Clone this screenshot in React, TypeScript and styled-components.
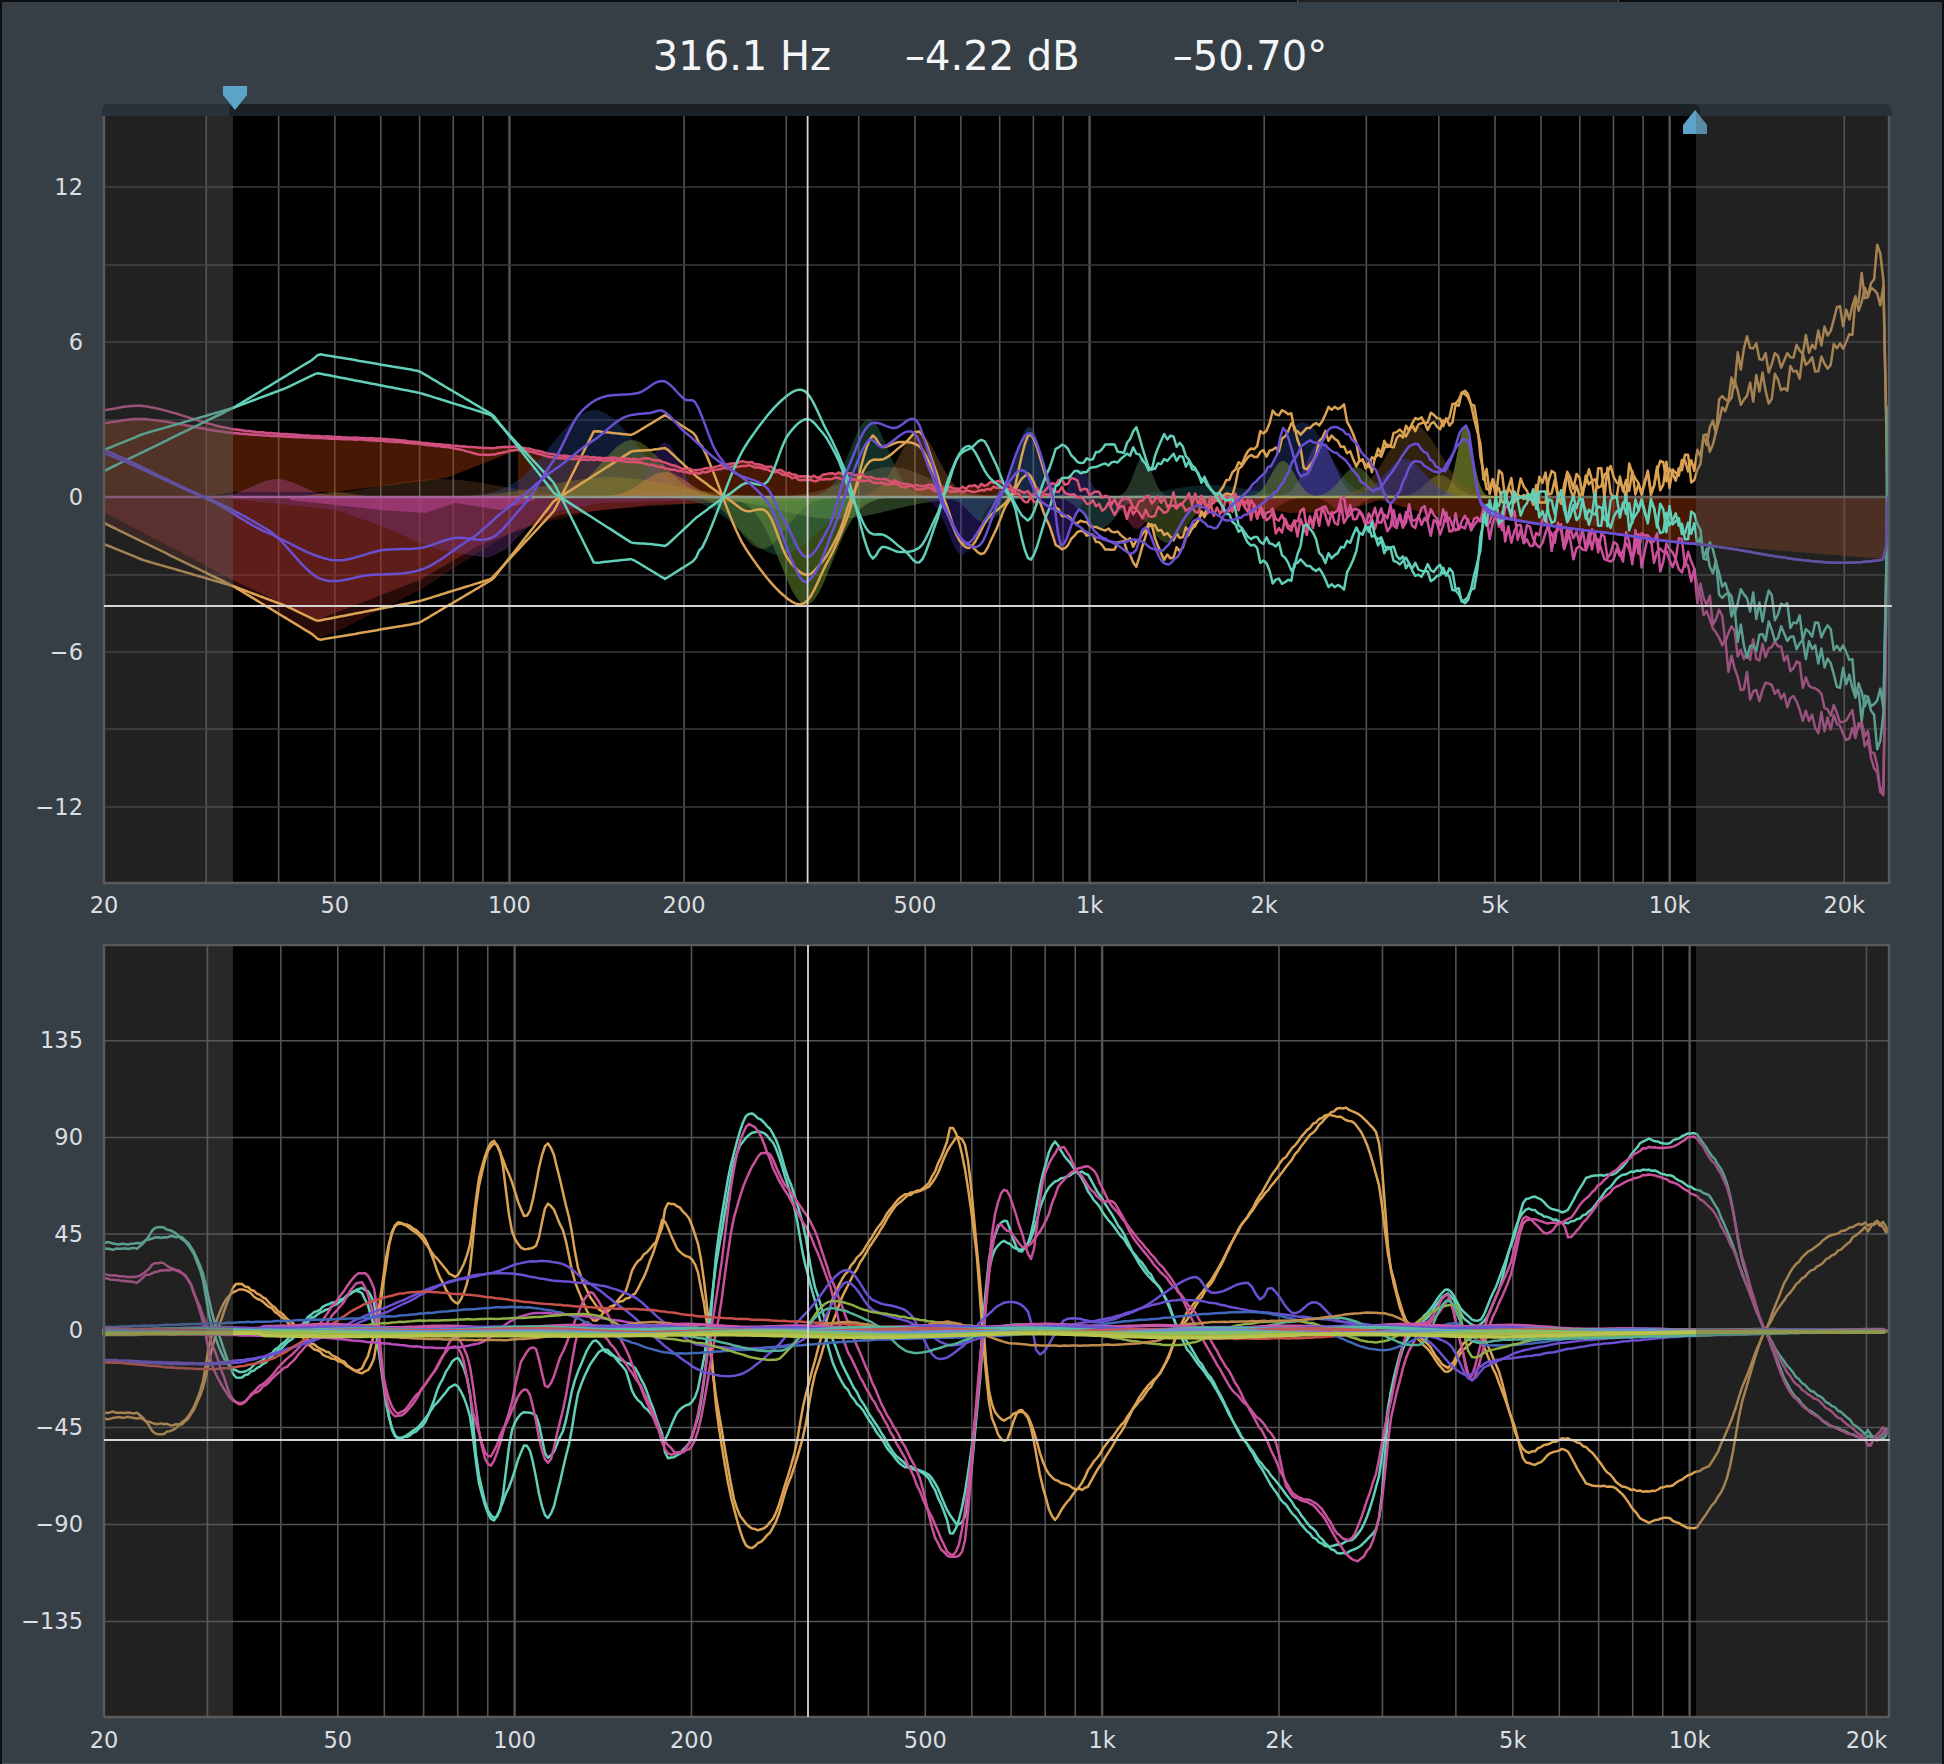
import React from "react";
import styled, { createGlobalStyle } from "styled-components";

const GlobalStyle = createGlobalStyle`
  html, body { margin: 0; padding: 0; background: #0c0e10; }
  #root { width: 1944px; height: 1764px; overflow: hidden; }
`;

const Page = styled.div`
  width: 1944px;
  height: 1764px;
  display: flex;
  flex-direction: column;
`;
const TopStrip = styled.div`
  height: 2px;
  flex: none;
  display: flex;
`;
const TopTab = styled.div`
  box-sizing: border-box;
  width: 322px;
  height: 2px;
  margin-left: 1297px;
  background: #232323;
  border-left: 1px solid #5a5a5a;
  border-right: 1px solid #5a5a5a;
`;
const Panel = styled.main`
  box-sizing: border-box;
  width: 1940px;
  height: 1762px;
  margin: 0 2px;
  background: #373f46;
  border-bottom: 1px solid #4b535a;
  display: flex;
  flex-direction: column;
  font-family: "DejaVu Sans", sans-serif;
`;
const Header = styled.header`
  height: 102px;
  flex: none;
  box-sizing: border-box;
  padding: 6px 0 0 36px;
  display: flex;
  align-items: center;
  justify-content: center;
  color: #f4f5f6;
  font-size: 40px;
  white-space: nowrap;
`;
const Readout = styled.span<{ $gap: number }>`
  margin-left: ${(p) => p.$gap}px;
`;
const RangeBar = styled.div`
  position: relative;
  flex: none;
  width: 1790px;
  height: 12px;
  margin-left: 100px;
  border-radius: 6px 6px 0 0;
  background: #29323a;
`;
const RangeActive = styled.div`
  height: 12px;
  width: 1471px;
  margin-left: 127px;
  border-radius: 6px 6px 0 0;
  background: #1c2125;
`;
const Handle = styled.svg<{ $left: number; $top: number }>`
  position: absolute;
  left: ${(p) => p.$left}px;
  top: ${(p) => p.$top}px;
  z-index: 2;
`;
const ChartSvg = styled.svg`
  display: block;
  flex: none;
`;
const AxisText = styled.text<{ $anchor: string }>`
  font-family: "DejaVu Sans", sans-serif;
  font-size: 22.5px;
  fill: #dcdee0;
  text-anchor: ${(p) => p.$anchor};
`;
const GridLine = styled.line<{ $major?: boolean; $dim?: boolean }>`
  stroke: ${(p) => (p.$dim ? "#3a3a3a" : "#545454")};
  stroke-width: ${(p) => (p.$major ? 2.4 : 1.6)};
`;
const Frame = styled.path`
  fill: none;
  stroke: #5a5a5a;
  stroke-width: 2.5;
`;
const Curve = styled.path<{ $w?: number }>`
  fill: none;
  stroke-width: ${(p) => p.$w ?? 2.5};
  stroke-linejoin: round;
  stroke-linecap: round;
`;
const Crosshair = styled.line`
  stroke: #d4d4d4;
  stroke-width: 1.8;
`;

const TEAL = "#62cfb8";
const ORANGE = "#dba253";
const PURPLE = "#6a4fd0";
const MAGENTA = "#c9509a";

type Opt = { amp?: number[]; step?: number; linearTo?: number; seed: number; wobble?: number };
const rnd = (seed: number, i: number) => {
  const v = Math.sin(i * 12.9898 + seed * 78.233) * 43758.5453;
  return (v - Math.floor(v)) * 2 - 1;
};
const lerpTable = (t: number[] | undefined, x: number) => {
  if (!t) return 0;
  if (x <= t[0]) return t[1];
  for (let i = 0; i + 2 < t.length; i += 2) {
    if (x <= t[i + 2]) {
      const k = (x - t[i]) / (t[i + 2] - t[i]);
      return t[i + 1] + (t[i + 3] - t[i + 1]) * k;
    }
  }
  return t[t.length - 1];
};
const at = (k: number[], x: number, linearTo = 0) => {
  const n = k.length / 2;
  let i = 0;
  while (i < n - 2 && x > k[(i + 1) * 2]) i++;
  const x1 = k[i * 2], x2 = k[i * 2 + 2];
  const y1 = k[i * 2 + 1], y2 = k[i * 2 + 3];
  const t = Math.min(1, Math.max(0, (x - x1) / (x2 - x1)));
  if (x < linearTo) return y1 + (y2 - y1) * t;
  const x0 = i > 0 ? k[i * 2 - 2] : x1;
  const y0 = i > 0 ? k[i * 2 - 1] : y1;
  const x3 = i < n - 2 ? k[i * 2 + 4] : x2;
  const y3 = i < n - 2 ? k[i * 2 + 5] : y2;
  const h = x2 - x1;
  const m1 = ((y2 - y0) / (x2 - x0)) * h * 0.85;
  const m2 = ((y3 - y1) / (x3 - x1)) * h * 0.85;
  const t2 = t * t, t3 = t2 * t;
  return (2 * t3 - 3 * t2 + 1) * y1 + (t3 - 2 * t2 + t) * m1 + (-2 * t3 + 3 * t2) * y2 + (t3 - t2) * m2;
};
type Pt = [number, number];
const sample = (k: number[], o: Opt): Pt[] => {
  const pts: Pt[] = [];
  const step = o.step ?? 3;
  const xa = k[0], xb = k[k.length - 2];
  let i = 0;
  for (let x = xa; x < xb; x += step) {
    const n = rnd(o.seed, i++) * lerpTable(o.amp, x);
    const w = o.wobble ? Math.sin(x / 37 + o.seed) * o.wobble : 0;
    pts.push([x, at(k, x, o.linearTo) + n + w]);
  }
  pts.push([xb, k[k.length - 1]]);
  return pts;
};
const toD = (p: Pt[]) => "M" + p.map((q) => q[0].toFixed(1) + " " + q[1].toFixed(1)).join("L");
const mirror = (p: Pt[], y0: number): Pt[] => p.map((q) => [q[0], 2 * y0 - q[1]]);
const poly = (flat: number[]) => {
  const out: string[] = [];
  for (let i = 0; i < flat.length; i += 2) out.push(flat[i] + " " + flat[i + 1]);
  return "M" + out.join("L") + "Z";
};
const gauss = (cx: number, s: number, h: number, y0: number) => {
  const p: Pt[] = [];
  for (let x = cx - 3.2 * s; x <= cx + 3.2 * s; x += Math.max(1.5, s / 6)) {
    p.push([x, y0 - h * Math.exp(-((x - cx) ** 2) / (2 * s * s))]);
  }
  return toD(p) + "Z";
};

/* ---------- axes ---------- */
const FREQS = [30, 40, 50, 60, 70, 80, 90, 100, 200, 300, 400, 500, 600, 700, 800, 900, 1000, 2000, 3000, 4000, 5000, 6000, 7000, 8000, 9000, 10000, 20000];
const MAJOR = [100, 1000, 10000];
const L = 104, R = 1889;
const fx = (f: number, dec: number) => L + dec * Math.log10(f / 20);
const XLABELS: [number, string][] = [[20, "20"], [50, "50"], [100, "100"], [200, "200"], [500, "500"], [1000, "1k"], [2000, "2k"], [5000, "5k"], [10000, "10k"], [20000, "20k"]];

/* ---------- magnitude data ---------- */
const Y0 = 497;
const T1 = [104,471,143,452,233,408,286,388,317,373,420,393,491,415,554,483,594,563,632,559,665,579,695,560,746,445,788,395,806,392,828,433,846,473,871,557,882,547,900,552,920,547,936,517,945,493,958,457,971,448,983,440,994,460,1007,490,1029,520,1043,483,1061,443,1074,460,1090,458,1110,445,1123,450,1137,430,1150,472,1161,438,1174,440,1199,473,1212,493,1230,500,1244,530,1275,543,1293,567,1306,527,1324,557,1350,540,1365,527,1383,547,1414,567,1440,567,1469,600,1480,547,1487,507,1510,503,1600,510,1686,520,1701,540,1732,600,1772,607,1803,627,1847,647,1861,707,1880,688,1885,677,1888,407];
const T2 = [104,450,143,434,233,408,312,360,319,354,419,371,493,415,554,493,632,543,650,544,666,546,697,517,728,495,746,483,767,482,788,435,807,419,822,432,837,457,853,500,869,532,884,535,904,550,920,562,936,523,949,477,962,450,971,447,989,477,1012,500,1029,559,1045,520,1058,483,1096,467,1123,460,1137,450,1150,472,1166,457,1186,463,1203,480,1244,533,1284,588,1300,560,1341,588,1365,527,1390,550,1420,575,1450,575,1469,600,1480,540,1490,510,1600,512,1686,522,1705,545,1750,650,1776,630,1838,675,1870,710,1878,738,1885,677,1888,407];
const TAMP = [104,0,1000,0,1040,2,1250,6,1470,7,1490,17,1690,19,1720,17,1884,13,1886,0];
const P1 = [104,453,205,498,268,533,333,560,384,550,420,548,455,538,491,538,522,507,554,460,580,413,603,397,638,393,663,381,686,400,695,402,717,453,735,473,766,487,784,520,806,557,829,527,846,473,869,425,895,428,916,420,931,460,945,507,962,540,980,545,998,503,1029,433,1052,493,1061,545,1079,510,1096,533,1114,543,1134,553,1145,527,1163,563,1177,557,1195,520,1215,528,1230,507,1275,460,1284,428,1302,477,1333,427,1374,467,1391,503,1414,462,1440,472,1467,440,1482,505,1515,520,1600,532,1686,543,1885,559,1888,497];
const P2 = [104,450,205,497,268,530,321,579,370,575,420,570,469,540,509,507,554,470,594,440,625,417,650,413,663,411,686,433,717,460,766,500,802,580,815,573,837,520,851,477,869,440,882,447,913,432,931,473,945,510,967,543,985,520,1003,490,1023,470,1040,500,1061,513,1092,535,1119,543,1137,540,1163,550,1195,507,1230,520,1275,493,1306,443,1340,455,1374,490,1414,445,1445,470,1467,425,1478,495,1490,510,1515,520,1600,532,1686,543,1885,559,1888,497];
const RP1 = [104,410,143,406,233,429,317,436,384,439,446,445,487,448,518,447,558,455,634,459,650,459,695,470,746,462,806,477,842,473,918,485,962,488,1003,483,1029,493,1065,480,1096,497,1140,503,1190,500,1250,510,1290,520,1340,515,1380,512,1420,525,1470,520,1515,525,1600,545,1686,558,1701,593,1737,643,1776,653,1825,700,1860,727,1876,750,1884,778,1888,470];
const RP2 = [104,423,143,419,233,433,317,438,384,441,446,447,487,455,518,450,558,458,634,462,695,473,746,466,806,480,842,478,918,488,962,492,1003,488,1029,500,1065,490,1096,505,1140,515,1190,510,1250,505,1290,530,1340,505,1380,520,1420,515,1470,525,1515,530,1600,548,1686,560,1701,600,1720,640,1737,680,1776,695,1825,725,1860,735,1878,778,1884,782,1888,470];
const RAMP = [104,0,560,0.4,1000,2,1040,4,1250,11,1480,13,1500,18,1690,19,1720,15,1884,11,1886,0];

const t1 = sample(T1, { seed: 1, amp: TAMP, linearTo: 700, step: 3.1 });
const t2 = sample(T2, { seed: 2, amp: TAMP, linearTo: 700, step: 3.1 });
const MAG_T = [toD(t1), toD(t2)];
const MAG_O = [toD(mirror(t1, Y0)), toD(mirror(t2, Y0))];
const MAG_P = [toD(sample(P1, { seed: 3, step: 3, amp: [104, 0, 1000, 0, 1250, 1.5, 1480, 1.5, 1500, 0] })), toD(sample(P2, { seed: 4, step: 3, amp: [104, 0, 1000, 0, 1250, 1.5, 1480, 1.5, 1500, 0] }))];
const MAG_R = [toD(sample(RP1, { seed: 5, amp: RAMP, step: 3.1 })), toD(sample(RP2, { seed: 6, amp: RAMP, step: 3.1 }))];

const BROWN = "rgba(170,60,10,.42)";
const POLYS: [number[], string][] = [
  [[104,423,143,419,233,429,317,436,384,439,446,445,487,448,518,447,518,450,446,478,335,492,233,492,205,497,104,497], BROWN],
  [[104,423,143,419,233,433,233,497,104,497], "rgba(130,70,40,.18)"],
  [[518,447,558,455,634,459,695,470,746,462,806,477,842,473,918,485,962,488,1003,483,1040,497,518,497], BROWN],
  [[1170,497,1888,497,1885,559,1686,543,1515,520,1470,520,1420,512,1380,500,1340,512,1290,513,1240,505,1170,498], BROWN],
  [[104,523,143,540,233,587,317,639,340,630,420,590,490,545,520,528,600,510,700,503,830,500,830,497,104,497], "rgba(120,35,25,.34)"],
  [[104,512,233,580,317,620,420,580,480,545,560,515,650,505,800,500,800,497,104,497], "rgba(160,50,45,.45)"],
  [[233,499,336,510,384,527,420,543,440,550,487,558,505,550,540,515,600,503,700,500,700,497,233,497], "rgba(130,60,150,.32)"],
  [[290,500,380,510,425,513,455,503,500,510,535,500,535,497,290,497], "rgba(190,70,150,.55)"],
];
const BUMPS: [number, number, number, string][] = [
  [594,42,87,"rgba(40,70,140,.38)"],[665,15,55,"rgba(70,40,140,.42)"],[632,30,57,"rgba(130,150,50,.42)"],[665,22,25,"rgba(220,130,60,.45)"],[610,60,20,"rgba(170,150,40,.3)"],
  [277,24,18,"rgba(190,80,170,.35)"],[335,18,5,"rgba(210,150,60,.3)"],[440,60,18,"rgba(160,100,60,.25)"],
  [869,19,78,"rgba(60,160,130,.3)"],[918,20,64,"rgba(170,110,50,.35)"],[890,40,30,"rgba(150,130,90,.3)"],[1029,13,70,"rgba(50,100,170,.4)"],[1081,9,28,"rgba(70,60,170,.38)"],[1143,9,40,"rgba(100,150,110,.35)"],[1210,40,12,"rgba(40,110,120,.3)"],
  [806,26,-108,"rgba(110,150,50,.5)"],[780,38,-58,"rgba(40,110,90,.38)"],[835,55,-22,"rgba(110,170,90,.35)"],[762,24,-52,"rgba(120,160,60,.35)"],
  [962,14,-58,"rgba(60,40,150,.42)"],[985,15,-26,"rgba(60,130,130,.35)"],[1061,11,-50,"rgba(70,40,160,.4)"],[1168,20,-46,"rgba(110,130,50,.42)"],[1100,16,-32,"rgba(60,130,130,.35)"],[1137,12,-32,"rgba(170,50,80,.42)"],
  [1303,25,75,"rgba(40,70,140,.38)"],[1320,14,55,"rgba(90,70,190,.45)"],[1283,12,36,"rgba(130,150,50,.45)"],[1356,15,30,"rgba(110,150,60,.42)"],[1465,8,70,"rgba(140,160,50,.6)"],[1440,14,22,"rgba(140,160,50,.45)"],[1414,26,72,"rgba(130,90,40,.38)"],[1405,20,38,"rgba(60,60,170,.45)"],[1345,12,-16,"rgba(200,60,80,.35)"],[1260,16,-18,"rgba(200,60,80,.35)"],[1600,25,-30,"rgba(220,70,60,.16)"],
];
const ZERO_SEGS: [number, number, string][] = [[104,520,"#a4619a"],[520,1260,"#8f9a8c"],[1260,1500,"#a0a45c"],[1500,1888,"#6d6660"]];

/* ---------- phase data ---------- */
const PY0 = 1330.7;
const TA = [104,1243,143,1242,156,1227,172,1232,187,1242,201,1267,214,1320,228,1360,236,1377,259,1367,290,1340,312,1318,339,1303,361,1288,375,1307,382,1370,393,1433,404,1437,424,1423,442,1380,457,1358,469,1387,478,1470,489,1512,500,1510,513,1427,536,1415,547,1457,562,1433,576,1377,594,1340,607,1353,634,1367,643,1383,663,1437,666,1458,686,1447,699,1413,708,1347,717,1247,732,1160,747,1115,761,1120,775,1137,788,1177,802,1220,815,1287,833,1340,846,1373,869,1413,900,1460,927,1477,945,1513,951,1535,962,1507,976,1413,985,1297,991,1247,1005,1220,1018,1250,1029,1240,1043,1173,1054,1142,1065,1157,1078,1173,1092,1197,1114,1227,1137,1257,1159,1287,1181,1333,1212,1380,1244,1440,1275,1480,1311,1527,1333,1550,1347,1553,1370,1537,1380,1513,1390,1397,1407,1337,1427,1313,1448,1289,1464,1313,1480,1320,1493,1293,1513,1240,1524,1202,1538,1198,1550,1208,1567,1210,1587,1178,1616,1173,1645,1140,1665,1144,1694,1133,1710,1153,1727,1183,1743,1263,1764,1328,1793,1373,1813,1392,1838,1410,1866,1433,1888,1430];
const TB = [104,1249,138,1248,147,1240,176,1237,187,1243,201,1273,212,1327,225,1360,240,1372,259,1362,290,1337,312,1314,339,1300,361,1293,375,1330,388,1413,397,1437,415,1430,437,1403,455,1385,469,1413,480,1487,493,1520,509,1487,527,1445,547,1518,567,1453,580,1387,603,1350,625,1370,634,1395,656,1420,663,1442,677,1413,695,1397,703,1363,719,1247,737,1153,757,1132,773,1143,793,1203,806,1267,824,1333,837,1373,860,1407,900,1463,931,1477,949,1513,958,1525,967,1507,980,1380,989,1270,1003,1242,1018,1250,1029,1243,1047,1190,1065,1177,1085,1173,1101,1197,1123,1233,1141,1267,1163,1293,1186,1347,1208,1377,1244,1440,1284,1503,1324,1545,1350,1540,1361,1530,1378,1480,1390,1397,1407,1340,1427,1318,1448,1294,1464,1318,1480,1325,1495,1300,1522,1213,1546,1217,1567,1223,1587,1213,1620,1177,1645,1170,1673,1177,1690,1187,1710,1197,1727,1230,1747,1287,1764,1328,1789,1387,1809,1410,1834,1427,1867,1438,1888,1430];
const PA = [104,1274,138,1277,156,1263,172,1268,187,1278,201,1310,214,1350,236,1403,259,1387,286,1360,312,1333,335,1303,361,1273,375,1293,384,1380,397,1413,415,1397,437,1367,455,1337,469,1363,482,1447,491,1465,509,1413,522,1360,535,1348,547,1388,562,1353,589,1293,604,1310,625,1347,643,1393,663,1438,681,1453,695,1427,717,1293,735,1163,746,1127,757,1130,779,1180,806,1227,828,1280,846,1347,873,1400,904,1457,927,1507,949,1553,958,1547,969,1480,982,1340,994,1220,1006,1190,1020,1227,1032,1257,1043,1180,1062,1147,1078,1172,1101,1200,1114,1203,1137,1243,1168,1280,1195,1313,1226,1367,1261,1430,1293,1493,1316,1503,1349,1540,1374,1480,1388,1413,1407,1333,1430,1320,1448,1295,1460,1340,1470,1378,1489,1313,1509,1267,1524,1218,1546,1233,1563,1223,1569,1238,1583,1223,1604,1197,1624,1183,1649,1175,1674,1183,1690,1193,1710,1207,1727,1237,1764,1328,1790,1392,1834,1427,1867,1438,1888,1430];
const PB = [104,1278,138,1282,147,1275,172,1270,187,1278,201,1315,214,1370,236,1403,255,1393,286,1367,312,1340,339,1308,361,1282,375,1320,388,1407,406,1412,428,1380,451,1347,462,1355,475,1420,489,1457,505,1425,527,1390,547,1463,562,1413,580,1327,600,1332,625,1363,640,1385,656,1420,665,1450,678,1453,696,1437,717,1327,735,1213,757,1158,770,1155,784,1183,811,1223,833,1283,860,1353,886,1413,918,1473,936,1540,953,1557,965,1540,976,1413,994,1237,1007,1230,1025,1247,1043,1227,1061,1183,1090,1167,1110,1203,1150,1253,1172,1280,1203,1340,1235,1393,1275,1440,1288,1490,1315,1507,1353,1560,1370,1547,1380,1513,1392,1413,1411,1347,1440,1312,1450,1300,1461,1345,1472,1380,1493,1317,1509,1280,1524,1223,1546,1223,1567,1220,1587,1197,1612,1173,1645,1148,1669,1148,1694,1137,1710,1158,1727,1187,1743,1260,1764,1328,1793,1380,1813,1397,1838,1417,1867,1438,1888,1430];
const PAMP = [104,0.9,1862,0.9,1868,8,1888,8];
const ta = sample(TA, { seed: 11, amp: PAMP, step: 3 });
const tb = sample(TB, { seed: 12, amp: PAMP, step: 3 });
const PH_T = [toD(ta), toD(tb)];
const PH_O = [toD(mirror(ta, PY0)), toD(mirror(tb, PY0))];
const PH_P = [toD(sample(PA, { seed: 13, amp: PAMP, step: 3 })), toD(sample(PB, { seed: 14, amp: PAMP, step: 3 }))];

const SMALL: [number[], string][] = [
  [[104,1360,205,1363,268,1356,312,1340,379,1310,446,1283,491,1273,527,1262,562,1264,589,1283,625,1310,670,1350,704,1372,739,1375,770,1353,806,1313,846,1270,873,1300,909,1313,936,1358,962,1347,982,1320,1007,1302,1029,1313,1038,1355,1065,1320,1100,1322,1137,1310,1195,1277,1212,1293,1248,1283,1261,1300,1270,1287,1293,1313,1315,1302,1337,1320,1365,1325,1420,1335,1450,1345,1470,1380,1485,1367,1526,1350,1587,1340,1694,1335,1764,1333,1888,1331], PURPLE],
  [[104,1362,233,1363,300,1345,379,1315,455,1280,504,1273,549,1280,598,1285,634,1297,665,1323,700,1345,790,1345,820,1325,846,1282,873,1310,909,1322,950,1345,990,1335,1030,1330,1100,1320,1180,1300,1260,1312,1330,1320,1420,1336,1465,1375,1488,1362,1530,1356,1600,1344,1694,1336,1888,1331], PURPLE],
  [[104,1362,210,1369,268,1360,321,1330,370,1302,415,1292,469,1295,536,1303,603,1308,650,1310,708,1317,806,1322,918,1328,1100,1332,1190,1338,1300,1338,1400,1332,1888,1331], "#c8504a"],
  [[104,1327,312,1320,379,1317,513,1307,562,1313,625,1340,670,1353,739,1350,873,1340,1010,1335,1141,1320,1252,1312,1297,1320,1382,1350,1456,1323,1485,1345,1600,1336,1888,1331], "#3f68b8"],
  [[104,1333,312,1337,379,1343,446,1348,482,1342,513,1320,536,1313,600,1318,680,1330,800,1335,1000,1332,1888,1331], "#b84cb8"],
  [[300,1332,400,1322,446,1320,520,1318,594,1315,640,1334,700,1343,775,1360,797,1340,828,1302,873,1312,960,1325,1080,1333,1180,1345,1240,1325,1305,1322,1380,1342,1456,1305,1470,1355,1490,1350,1550,1338,1888,1331], "#8fae45"],
  [[650,1330,700,1338,784,1350,820,1313,833,1308,873,1323,909,1352,950,1345,1010,1325,1100,1330,1200,1335,1340,1318,1420,1345,1448,1300,1470,1340,1500,1340,1888,1331], "#55b095"],
  [[104,1335,300,1334,500,1340,600,1330,650,1322,760,1335,846,1322,900,1330,950,1322,1010,1343,1100,1345,1160,1340,1180,1325,1300,1320,1382,1313,1430,1330,1888,1331], "#c08a4c"],
];
const BUNDLE = ["#c856a8", "#6a55d0", "#58b8a0", "#c05a58", "#6f8fd0", "#7fc070", "#a4b848", "#b8c44e"];
const bundleEnv = (x: number) => (x < 260 ? 0.55 : x < 1500 ? 1 : Math.max(0.25, 1 - (x - 1500) / 260));
const BUNDLE_D = BUNDLE.map((_, i) => {
  const p: Pt[] = [];
  const off = (i - 3.5) * 1.35;
  for (let x = 104; x <= 1888; x += 5) {
    const w = Math.sin(x / (19 + i * 4) + i * 2) * 1.1 + Math.sin(x / 61 + i) * 1;
    p.push([x, PY0 + 0.4 + (off + w) * bundleEnv(x)]);
  }
  return toD(p);
});

const MAG_H = [187, 265, 342, 420, 497, 575, 652, 729, 807];
const MAG_LABELS: [number, string][] = [[187, "12"], [342, "6"], [497, "0"], [652, "−6"], [807, "−12"]];
const PH_H = [1040.7, 1137.5, 1234, 1330.7, 1427.5, 1524.5, 1621.5];
const PH_LABELS: [number, string][] = [[1040.7, "135"], [1137.5, "90"], [1234, "45"], [1330.7, "0"], [1427.5, "−45"], [1524.5, "−90"], [1621.5, "−135"]];

const Shades = ({ top, h }: { top: number; h: number }) => (
  <>
    <rect x={L} y={top} width={102} height={h} fill="rgba(82,82,82,.4)" />
    <rect x={206} y={top} width={27} height={h} fill="rgba(96,96,96,.42)" />
    <rect x={1696} y={top} width={R - 1696} height={h} fill="rgba(82,82,82,.4)" />
  </>
);

const Grid = ({ dec, top, bottom, rows, dim }: { dec: number; top: number; bottom: number; rows: number[]; dim: boolean }) => (
  <>
    {FREQS.map((f) => (
      <GridLine key={f} $major={MAJOR.includes(f)} x1={fx(f, dec)} x2={fx(f, dec)} y1={top} y2={bottom} />
    ))}
    {rows.map((y) => (
      <GridLine key={y} $dim={dim} x1={L} x2={R} y1={y} y2={y} />
    ))}
  </>
);

const Axis = ({ dec, labelY, rows }: { dec: number; labelY: number; rows: [number, string][] }) => (
  <>
    {rows.map(([y, t]) => (
      <AxisText key={t} $anchor="end" x={83} y={y + 7.5}>{t}</AxisText>
    ))}
    {XLABELS.map(([f, t]) => (
      <AxisText key={t} $anchor="middle" x={fx(f, dec)} y={labelY}>{t}</AxisText>
    ))}
  </>
);

const MagnitudeChart = () => (
  <ChartSvg width={1940} height={828} viewBox="2 116 1940 828">
    <defs>
      <linearGradient id="rp" gradientUnits="userSpaceOnUse" x1="104" x2="1888" y1="0" y2="0">
        <stop offset="0" stopColor="#c8508f" />
        <stop offset="0.35" stopColor="#d8506e" />
        <stop offset="0.62" stopColor="#dc5478" />
        <stop offset="0.72" stopColor="#d0509c" />
        <stop offset="1" stopColor="#c8509a" />
      </linearGradient>
    </defs>
    <rect x={L} y={116} width={R - L} height={767} fill="#000" />
    <Grid dec={580.1} top={116} bottom={883} rows={MAG_H} dim />
    {POLYS.map(([p, c], i) => <path key={i} d={poly(p)} fill={c} />)}
    {BUMPS.map(([x, s, h, c], i) => <path key={i} d={gauss(x, s, h, Y0)} fill={c} />)}
    {ZERO_SEGS.map(([a, b, c]) => <line key={a} x1={a} x2={b} y1={Y0} y2={Y0} stroke={c} strokeWidth={2.4} />)}
    {MAG_O.map((d, i) => <Curve key={i} d={d} stroke={ORANGE} />)}
    {MAG_R.map((d, i) => <Curve key={i} d={d} stroke="url(#rp)" />)}
    {MAG_T.map((d, i) => <Curve key={i} d={d} stroke={TEAL} />)}
    {MAG_P.map((d, i) => <Curve key={i} d={d} stroke={PURPLE} />)}
    <Shades top={116} h={767} />
    <Frame d="M104 116V883H1889V116" />
    <Crosshair x1={807.6} x2={807.6} y1={116} y2={883} />
    <Crosshair x1={L} x2={1892} y1={606} y2={606} />
    <Axis dec={580.1} labelY={913} rows={MAG_LABELS} />
  </ChartSvg>
);

const PhaseChart = () => (
  <ChartSvg width={1940} height={817} viewBox="2 944 1940 817">
    <rect x={L} y={945} width={R - L} height={772} fill="#000" />
    <Grid dec={587.5} top={945} bottom={1717} rows={PH_H} dim={false} />
    {PH_O.map((d, i) => <Curve key={i} d={d} stroke={ORANGE} />)}
    {PH_T.map((d, i) => <Curve key={i} d={d} stroke={TEAL} />)}
    {PH_P.map((d, i) => <Curve key={i} d={d} stroke={MAGENTA} />)}
    {SMALL.map(([k, c], i) => <Curve key={i} d={toD(sample(k, { seed: 20 + i, step: 4, amp: [104, 0.3] }))} stroke={c} />)}
    {BUNDLE_D.map((d, i) => <Curve key={i} d={d} stroke={BUNDLE[i]} $w={3.4} />)}
    <Shades top={945} h={772} />
    <Frame d="M104 1717V945H1889V1717H104" />
    <Crosshair x1={808} x2={808} y1={945} y2={1717} />
    <Crosshair x1={L} x2={1890} y1={1440} y2={1440} />
    <Axis dec={587.5} labelY={1748} rows={PH_LABELS} />
  </ChartSvg>
);

export default function App() {
  return (
    <>
      <GlobalStyle />
      <Page>
        <TopStrip>
          <TopTab />
        </TopStrip>
        <Panel>
          <Header>
            <Readout $gap={0}>316.1 Hz</Readout>
            <Readout $gap={74}>–4.22 dB</Readout>
            <Readout $gap={93}>–50.70°</Readout>
          </Header>
          <RangeBar>
            <RangeActive />
            <Handle $left={121} $top={-18} width={24} height={24} viewBox="0 0 24 24">
              <polygon points="0,0 24,0 24,9 12,24 0,9" fill="#5ba3c9" />
            </Handle>
            <Handle $left={1581} $top={6} width={24} height={24} viewBox="0 0 24 24">
              <polygon points="12,0 13,1 13,24 0,24 0,15" fill="#5ba3c9" />
              <polygon points="13,1 24,15 24,24 13,24" fill="#5a8ba6" />
            </Handle>
          </RangeBar>
          <MagnitudeChart />
          <PhaseChart />
        </Panel>
      </Page>
    </>
  );
}
